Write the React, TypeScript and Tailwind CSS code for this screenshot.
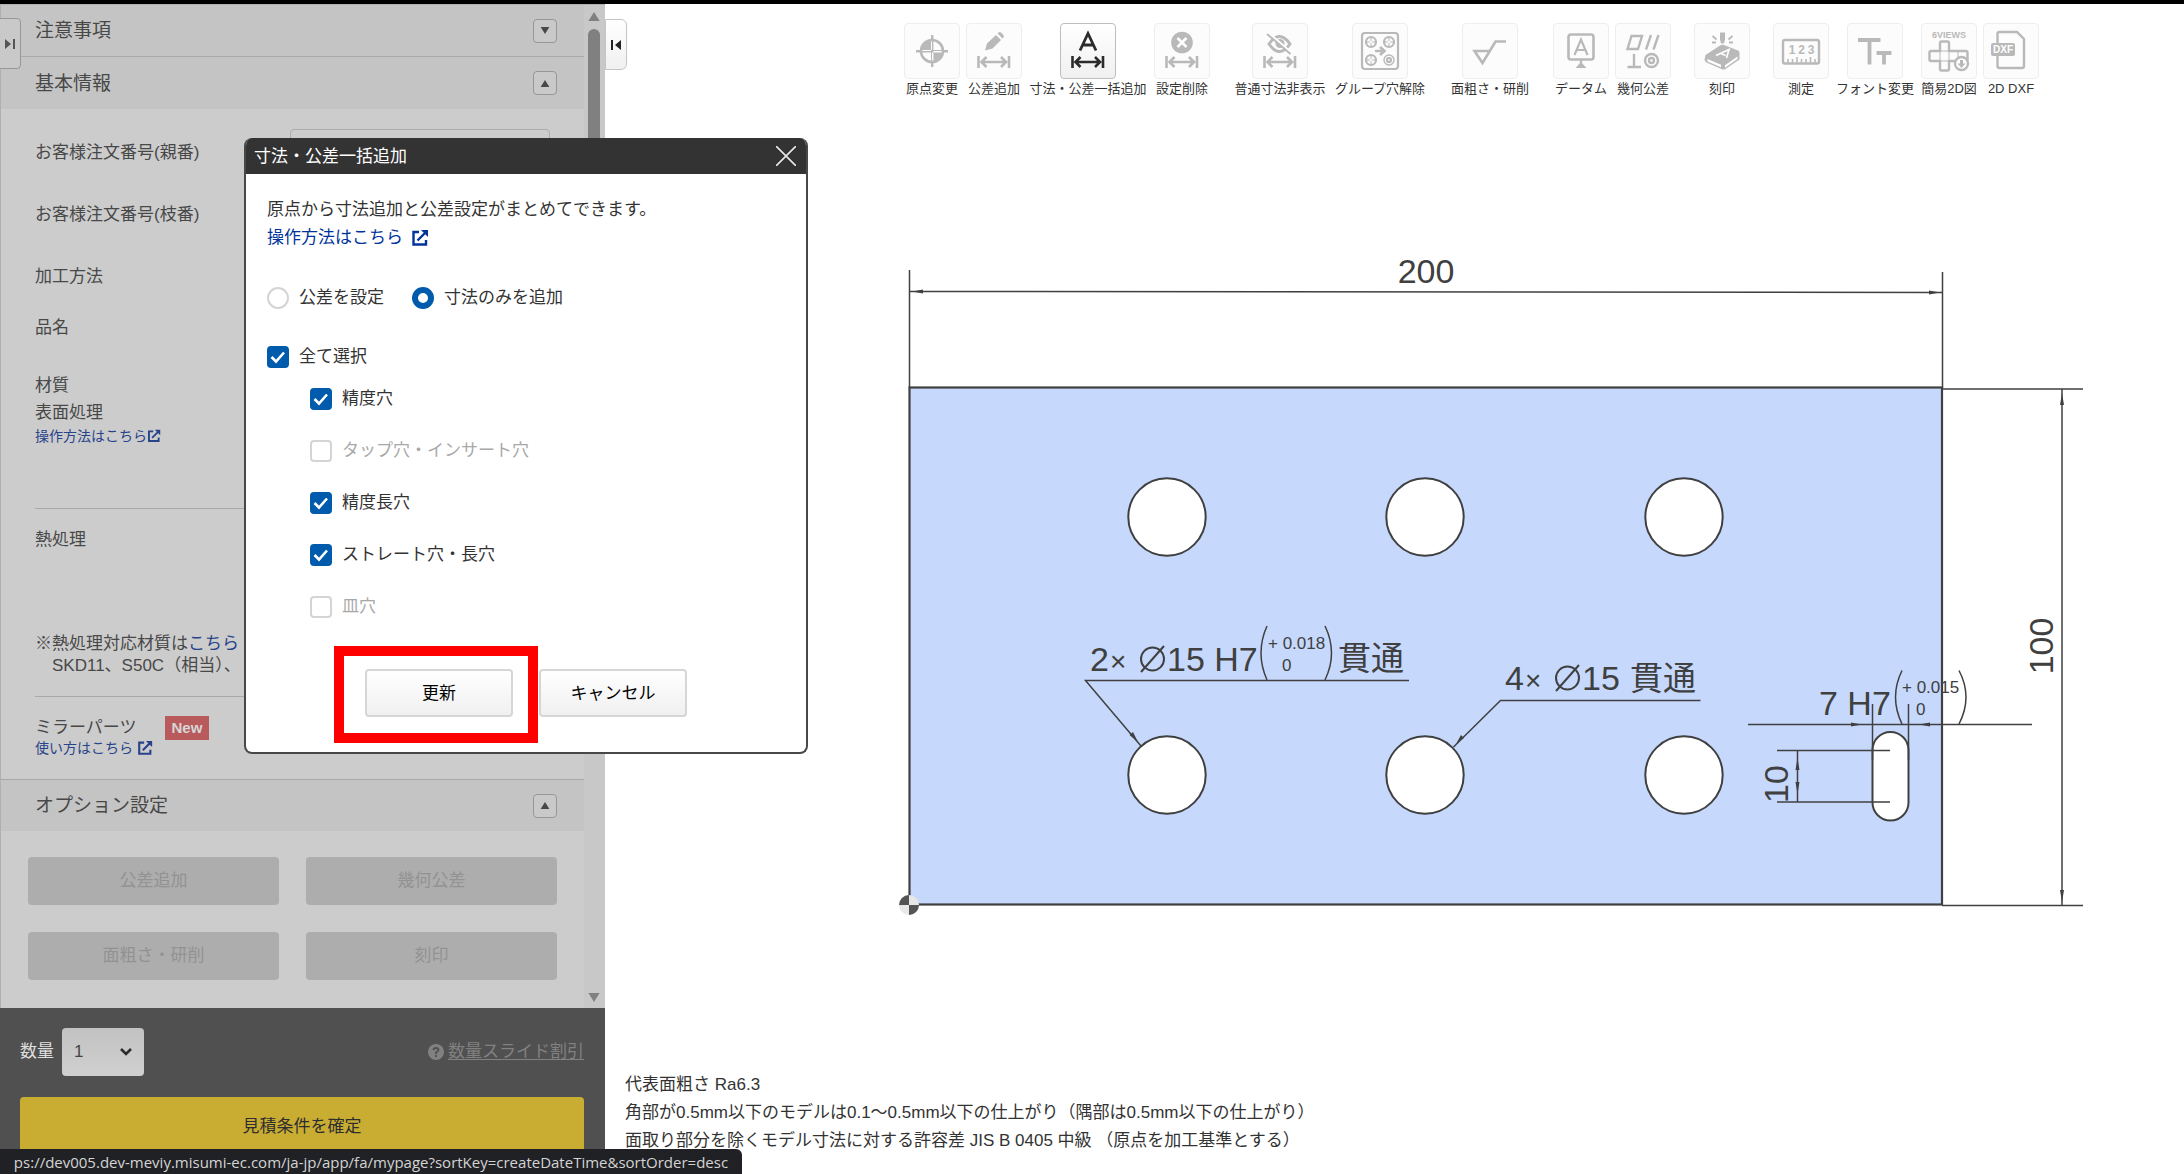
import { useState, type ReactNode } from 'react';

/* ---------- shared glyphs ---------- */

function ExternalIcon({ className }: { className: string }) {
  return (
    <svg viewBox="0 0 18 18" className={className} fill="none" stroke="currentColor" strokeWidth="2.400" aria-hidden="true">
      <path d="M8 3H2.500v12.500H15V11M6.500 11.500 15 3" />
      <path d="M10 1H17v7z" fill="currentColor" stroke="none" />
    </svg>
  );
}

function Triangle({ up, className }: { up?: boolean; className: string }) {
  return (
    <svg viewBox="0 0 10 8" className={className} fill="currentColor" aria-hidden="true">
      <path d={up ? 'M5 0 10 8H0z' : 'M0 0h10L5 8z'} />
    </svg>
  );
}

/* ---------- toolbar icons (56 x 56 grid) ---------- */

function Span() {
  return <path d="M12.5 33v12M43 33v12M15.5 39H40M20.500 34l-5 5 5 5M35 34l5 5-5 5" fill="none" stroke="currentColor" strokeWidth="2.600" />;
}

const icons: Record<string, ReactNode> = {
  origin: (
    <>
      <circle cx="28" cy="28" r="11" fill="none" stroke="currentColor" strokeWidth="2.600" />
      <path d="M28 28V17a11 11 0 0 0-11 11zM28 28v11a11 11 0 0 0 11-11zM27 12h2.400v32H27zM12 27h32v2.400H12z" fill="currentColor" />
    </>
  ),
  pencil: (
    <>
      <path d="m19 27.500 2-7L30 12l5 5-8.500 8.500zM31.500 10.500l1-1q1.500-1 3 .5l1.500 1.500q1.500 1.500.5 3l-1 1z" fill="currentColor" />
      <Span />
    </>
  ),
  bulk: (
    <>
      <path d="M20 27.500 28 10.500 36 27.500M23 22h10" fill="none" stroke="currentColor" strokeWidth="2.800" />
      <Span />
    </>
  ),
  remove: (
    <>
      <circle cx="28" cy="19.500" r="10.800" fill="currentColor" />
      <path d="m23.500 15 9 9m0-9-9 9" stroke="#fff" strokeWidth="2.600" />
      <Span />
    </>
  ),
  hide: (
    <>
      <path d="M17 21q10.500-15 21 0-10.500 15-21 0z" fill="none" stroke="currentColor" strokeWidth="3" />
      <circle cx="28" cy="20.500" r="4.500" fill="currentColor" />
      <path d="m15.500 9 24 20.500" stroke="#fff" strokeWidth="2" />
      <path d="M15 11 38.500 31" stroke="currentColor" strokeWidth="2" />
      <Span />
    </>
  ),
  group: (
    <g fill="none" stroke="currentColor" strokeWidth="2.200">
      <rect x="10" y="10" width="36" height="36" rx="3" />
      <circle cx="19" cy="19" r="5" />
      <circle cx="37" cy="19" r="5" />
      <circle cx="19" cy="37" r="5" />
      <circle cx="37" cy="37" r="5" strokeWidth="1.400" />
      <circle cx="37" cy="37" r="2" />
      <path d="M19 15v3m0 2v3m-4-4h3m2 0h3M37 15v3m0 2v3m-4-4h3m2 0h3M19 33v3m0 2v3m-4-4h3m2 0h3" strokeWidth="1" />
      <path d="M23 28h9m-4-4 4.500 4-4.500 4" strokeWidth="2.600" />
    </g>
  ),
  rough: <path d="M44 18.500H33.500L20.500 40l-8-12H27" fill="none" stroke="currentColor" strokeWidth="2.600" />,
  datum: (
    <>
      <rect x="15.500" y="11.500" width="25" height="25" rx="2.500" fill="none" stroke="currentColor" strokeWidth="2.600" />
      <path d="M21.500 32 28 16.500 34.500 32M24 27h8M28 37v5" fill="none" stroke="currentColor" strokeWidth="2.200" />
      <path d="M28 39l5.500 6h-11z" fill="currentColor" />
    </>
  ),
  geometric: (
    <g fill="none" stroke="currentColor" strokeWidth="2.400">
      <path d="M12.500 26 16.500 13H27l-4 13zM31 26.500 36 12M38.500 26.500 43.500 12M19 31v13M12.500 44h13.500" />
      <circle cx="36.500" cy="37.500" r="6.500" />
      <circle cx="36.500" cy="37.500" r="2.500" />
    </g>
  ),
  engrave: (
    <>
      <path d="M11.500 32 26 22.500q2-1 4-.5l14 5.500q2 1 1.500 3v6l-14 9.500q-2 1-4 0l-15-6.500q-2-1-2-3z" fill="currentColor" />
      <path d="M13.500 36l13.500 5.700v2.600l-13.500-5.700zM31 42.200l12.500-8.700v2.600L31 44.800z" fill="#fff" />
      <path d="M22 32.500 35 26.500 32.500 35M27 30.500l4.500 2" fill="none" stroke="#fff" strokeWidth="1.700" />
      <path d="M26 9.500h5v7l-1 4h-3l-1-4z" fill="currentColor" />
      <path d="m18.500 13 4 3.500M18 19.500h4M38.500 13l-4 3.500M39 19.500h-4" stroke="currentColor" strokeWidth="1.800" />
    </>
  ),
  measure: (
    <>
      <rect x="10" y="17" width="36" height="23.500" rx="2" fill="none" stroke="currentColor" strokeWidth="2.400" />
      <path d="M15 40v-4M19.500 40v-4M24 40v-6M28.500 40v-4M33 40v-4M37.500 40v-6M42 40v-4" stroke="currentColor" strokeWidth="1.600" />
      <g fill="currentColor" fontSize="12" fontWeight="700" textAnchor="middle">
        <text x="19" y="31">1</text>
        <text x="28.500" y="31">2</text>
        <text x="38" y="31">3</text>
      </g>
    </>
  ),
  font: <path d="M11 17h22.500M22.500 17v24.500M29.500 30h15M37 30v11.500" fill="none" stroke="currentColor" strokeWidth="3.800" />,
  views: (
    <>
      <text x="28" y="14.500" fontSize="9" fontWeight="700" textAnchor="middle" fill="currentColor">6VIEWS</text>
      <path d="M19 28v-8q0-1.500 1.500-1.500h6Q28 18.500 28 20v8h17q1.500 0 1.500 1.500v7q0 1.500-1.500 1.500H28v8q0 1.500-1.500 1.500h-6Q19 47.500 19 46v-8H10q-1.500 0-1.500-1.500v-7Q8.500 28 10 28z" fill="none" stroke="currentColor" strokeWidth="2.400" />
      <path d="M19 28h9v10h-9zM37 28v6" fill="none" stroke="currentColor" strokeWidth="1" />
      <circle cx="40.500" cy="40.500" r="6.500" fill="#fff" stroke="currentColor" strokeWidth="2.400" />
      <path d="M40.500 45 36.500 40.500h2.500V37h3v3.500h2.500z" fill="currentColor" />
    </>
  ),
  dxf: (
    <>
      <path d="M14.500 20V11q0-2 2-2H34l7 7v27q0 2-2 2H16.500q-2 0-2-2V33" fill="none" stroke="currentColor" strokeWidth="2.400" />
      <rect x="8" y="20" width="24" height="13" rx="2" fill="currentColor" />
      <text x="20" y="30" fontSize="10" fontWeight="700" textAnchor="middle" fill="#fff">DXF</text>
    </>
  ),
};

type Tool = { id: string; label: string; width: string; active?: boolean };

const toolGroups: Tool[][] = [
  [
    { id: 'origin', label: '原点変更', width: 'w-14' },
    { id: 'pencil', label: '公差追加', width: 'w-14' },
    { id: 'bulk', label: '寸法・公差一括追加', width: 'w-[120px]', active: true },
    { id: 'remove', label: '設定削除', width: 'w-14' },
  ],
  [
    { id: 'hide', label: '普通寸法非表示', width: 'w-[94px]' },
    { id: 'group', label: 'グループ穴解除', width: 'w-[94px]' },
  ],
  [{ id: 'rough', label: '面粗さ・研削', width: 'w-20' }],
  [
    { id: 'datum', label: 'データム', width: 'w-14' },
    { id: 'geometric', label: '幾何公差', width: 'w-14' },
  ],
  [{ id: 'engrave', label: '刻印', width: 'w-14' }],
  [
    { id: 'measure', label: '測定', width: 'w-14' },
    { id: 'font', label: 'フォント変更', width: 'w-20' },
    { id: 'views', label: '簡易2D図', width: 'w-14' },
    { id: 'dxf', label: '2D DXF', width: 'w-14' },
  ],
];

function Toolbar() {
  return (
    <div role="toolbar" className="flex justify-end gap-[23px] pr-[145px] pt-[19px]">
      {toolGroups.map((group) => (
        <div key={group[0].id} className="flex gap-[6px]">
          {group.map((tool) => (
            <label key={tool.id} className={`flex flex-col items-center ${tool.width}`}>
              <button
                type="button"
                disabled={!tool.active}
                className={
                  tool.active
                    ? 'size-14 rounded-sm border border-[#bdbdbd] bg-linear-to-b from-white to-[#f0f0f0] text-[#2b2b2b]'
                    : 'size-14 rounded-sm border border-[#eeeeee] bg-[#fcfcfc] text-[#b9b9b9]'
                }
              >
                <svg viewBox="1 1 54 54" className="size-full" fontFamily="Liberation Sans, sans-serif" aria-hidden="true">
                  {icons[tool.id]}
                </svg>
              </button>
              <span className="whitespace-nowrap text-[13px] leading-5 text-[#333]">{tool.label}</span>
            </label>
          ))}
        </div>
      ))}
    </div>
  );
}

/* ---------- part drawing ---------- */

const holes = [
  [1167, 517], [1425, 517], [1684, 517],
  [1167, 775], [1425, 775], [1684, 775],
];

function Drawing() {
  return (
    <svg viewBox="605 99 1579 972" className="block w-full" role="img" aria-label="2D図面" fontFamily='"Liberation Sans", "Noto Sans CJK JP", sans-serif' fill="#404040">
      <rect x="909.500" y="387.500" width="1032.500" height="517" fill="#c6d9fd" stroke="#404040" strokeWidth="2.200" />
      <g fill="#fff" stroke="#404040" strokeWidth="2">
        {holes.map(([x, y]) => (
          <circle key={`${x}-${y}`} cx={x} cy={y} r="38.700" />
        ))}
        <rect x="1872.500" y="732" width="36" height="88.500" rx="18" />
      </g>

      <g stroke="#404040" strokeWidth="1.500" fill="none">
        <path d="M909.500 270V388M1942.500 272V388M910 291.500 1942 292.500" />
        <path d="M1942 389H2083M1942 905.500H2083M2062 389V905" />
        <path d="M1409 680.500H1085.500L1141 746" />
        <path d="M1700.500 700.500H1500.500L1453.500 747" />
        <path d="M1748 724.500H2032M1872.500 704V760M1908.500 704V760" />
        <path d="M1777 750.500H1890M1777 802H1890M1797.500 750.500V802" />
        <path d="M1267 626Q1255 653 1267 680M1325 626Q1338 653 1325 680" />
        <path d="M1902 670.500Q1889 697 1902 724M1959 670.500Q1973 697 1959 724" />
      </g>
      <path d="M912 291.500l11-2v4zM1940 292.500l-11-2v4zM2062 393l-2 12h4zM2062 902l-2-12h4zM1138 742l-8.500-7 3.500-3zM1456 744l5-9 3 3zM1862 724.500l-11-2v4zM1919 724.500l11-2v4zM1797.500 758l-2 12h4zM1797.500 794l-2-12h4z" />

      <g fontSize="34">
        <text x="1426" y="283" textAnchor="middle">200</text>
        <text transform="translate(2053 646) rotate(-90)" textAnchor="middle">100</text>
        <text transform="translate(1788 784) rotate(-90)" textAnchor="middle">10</text>

        <text x="1090" y="671">2</text>
        <text x="1110" y="671" fontSize="28">×</text>
        <text x="1167" y="671">15 H7</text>
        <text x="1338" y="670" fontSize="33">貫通</text>

        <text x="1505" y="690">4</text>
        <text x="1525" y="690" fontSize="28">×</text>
        <text x="1582" y="690">15</text>
        <text x="1630" y="690" fontSize="33">貫通</text>

        <text x="1819" y="715">7 H7</text>
      </g>
      <g fill="none" stroke="#404040" strokeWidth="2">
        <circle cx="1152.500" cy="659" r="11.500" />
        <path d="M1141 672 1164 646" />
        <circle cx="1567.500" cy="678" r="11.500" />
        <path d="M1556 691 1579 665" />
      </g>
      <g fontSize="17">
        <text x="1268" y="649">+ 0.018</text>
        <text x="1282" y="671">0</text>
        <text x="1902" y="693">+ 0.015</text>
        <text x="1916" y="715">0</text>
      </g>

      <circle cx="909" cy="905" r="10" fill="#e8e8e8" />
      <path d="M909 905V895a10 10 0 0 0-10 10zM909 905v10a10 10 0 0 0 10-10z" fill="#555" />
    </svg>
  );
}

/* ---------- side panel ---------- */

function SectionHeader({ title, open, line }: { title: string; open?: boolean; line?: string }) {
  return (
    <div className={`flex h-[52px] items-center justify-between border-[#a9a9a9] bg-[#c4c4c4] pl-[34px] pr-[27px] ${line ?? ''}`}>
      <h2 className="pt-[2px] text-[19px]">{title}</h2>
      <button type="button" aria-label={title} className="flex size-6 items-center justify-center rounded-sm border border-[#979797] bg-[#c9c9c9]">
        <Triangle up={open} className="h-[7px] w-[10px]" />
      </button>
    </div>
  );
}

function SidePanel() {
  return (
    <aside className="flex w-[605px] shrink-0 flex-col text-[17px] text-[#484848]">
      <div className="flex border-l border-t border-[#b0b0b0] bg-[#cccccc]">
        <div className="min-w-0 flex-1">
          <SectionHeader title="注意事項" line="border-b" />
          <SectionHeader title="基本情報" open />
          <div className="px-[34px] pt-[13px]">
            <div className="flex h-[62px] items-center justify-between">
              <label htmlFor="order-parent">お客様注文番号(親番)</label>
              <input id="order-parent" className="h-12 w-[260px] rounded-sm border border-[#adadad] bg-[#cccccc]" />
            </div>
            <p className="flex h-[62px] items-center">お客様注文番号(枝番)</p>
            <p className="flex h-[62px] items-center">加工方法</p>
            <p className="flex h-10 items-center">品名</p>
            <p className="mt-6 leading-7">材質</p>
            <p className="leading-[26px]">表面処理</p>
            <a href="#usage" className="flex h-5 items-center text-[14px] text-[#27438a]">
              操作方法はこちら<ExternalIcon className="size-[14px]" />
            </a>
            <hr className="mt-[62px] border-[#a9a9a9]" />
            <p className="mt-[17px] leading-7">熱処理</p>
            <p className="mt-[79px] leading-[22px]">
              ※熱処理対応材質は<a href="#materials" className="text-[#27438a]">こちら</a>
            </p>
            <p className="pl-[17px] leading-[22px]">SKD11、S50C（相当）、</p>
            <hr className="mt-[19px] border-[#a9a9a9]" />
            <div className="mt-[19px] flex h-6 items-center gap-[28px]">
              <span>ミラーパーツ</span>
              <span className="bg-[#b95a5d] px-[7px] text-[15px] font-bold leading-6 text-[#d6d6d6]">New</span>
            </div>
            <a href="#mirror" className="flex h-4 items-center gap-1 text-[14px] text-[#27438a]">
              使い方はこちら<ExternalIcon className="size-4" />
            </a>
          </div>
          <div className="mt-[23px]">
            <SectionHeader title="オプション設定" open line="border-t" />
          </div>
          <div className="grid grid-cols-2 gap-[27px] px-[27px] pb-7 pt-[26px]">
            {['公差追加', '幾何公差', '面粗さ・研削', '刻印'].map((name) => (
              <button key={name} type="button" disabled className="h-12 rounded-sm bg-[#adadad] text-[#929292]">
                {name}
              </button>
            ))}
          </div>
        </div>
        <div className="flex w-[21px] flex-col items-center justify-between bg-[#c8c8c8] pb-[6px] pr-px pt-[7px] text-[#808080]">
          <div className="flex flex-col items-center gap-2">
            <Triangle up className="h-[9px] w-3" />
            <div className="h-[420px] w-3 rounded-full bg-[#808080]" />
          </div>
          <Triangle className="h-[9px] w-3" />
        </div>
      </div>
      <div className="flex-1 bg-[#505050] pb-4 pl-5 pr-[21px] pt-5">
        <div className="flex items-center justify-between">
          <label className="flex items-center gap-2 text-[#dedede]">
            数量
            <span className="relative">
              <select defaultValue="1" className="h-12 w-[82px] appearance-none rounded-sm bg-linear-to-b from-[#c2c2c2] to-[#d0d0d0] pl-3 text-[#444]">
                <option>1</option>
              </select>
              <svg viewBox="0 0 12 8" className="pointer-events-none absolute right-3 top-5 h-2 w-3" fill="none" stroke="#2b2b2b" strokeWidth="2.600" aria-hidden="true">
                <path d="m1 1 5 5 5-5" />
              </svg>
            </span>
          </label>
          <a href="#discount" className="flex items-center gap-1 text-[#818181]">
            <svg viewBox="0 0 16 16" className="size-4" aria-hidden="true">
              <circle cx="8" cy="8" r="8" fill="currentColor" />
              <path d="M5.500 6.200Q5.700 4 8 4t2.500 2Q10.500 7.300 8 8.500V10M8 11v2" fill="none" stroke="#505050" strokeWidth="1.900" />
            </svg>
            <span className="underline underline-offset-2">数量スライド割引</span>
          </a>
        </div>
        <button type="button" className="mt-[21px] h-[60px] w-full rounded-sm bg-[#c9ad33] text-[#2e2e2e]">
          見積条件を確定
        </button>
      </div>
    </aside>
  );
}

/* ---------- dialog ---------- */

function Check({ label, initial, disabled }: { label: string; initial?: boolean; disabled?: boolean }) {
  const [on, setOn] = useState(!!initial);
  return (
    <label className={`flex items-center gap-[10px] ${disabled ? 'text-[#a8a8a8]' : ''}`}>
      <span className="relative size-[22px]">
        <input
          type="checkbox"
          checked={on}
          disabled={disabled}
          onChange={() => setOn(!on)}
          className="block size-[22px] appearance-none rounded-sm border-2 border-[#d4d4d4] bg-white checked:border-[#005bac] checked:bg-[#005bac]"
        />
        {on && (
          <svg viewBox="0 0 22 22" className="pointer-events-none absolute inset-0" fill="none" stroke="#fff" strokeWidth="2.600" aria-hidden="true">
            <path d="m4.500 11 4.500 4.500 8-9" />
          </svg>
        )}
      </span>
      {label}
    </label>
  );
}

function BulkDialog() {
  const [mode, setMode] = useState('dims');
  const radio =
    'size-[22px] appearance-none rounded-full border-2 border-[#d4d4d4] bg-white checked:border-[6px] checked:border-[#005bac]';
  const action = 'h-12 w-[148px] rounded-sm border-2 border-[#d6d6d6] bg-linear-to-b from-white to-[#f0f0f0] pt-[2px] text-black';
  return (
    <section role="dialog" aria-label="寸法・公差一括追加" className="absolute left-[244px] top-[138px] w-[564px] overflow-hidden rounded-lg border-2 border-t-0 border-[#484848] bg-white text-[17px] text-[#333]">
      <header className="flex h-9 items-center justify-between bg-[#333] pl-2 pr-[10px] text-white">
        <h1 className="pt-[2px]">寸法・公差一括追加</h1>
        <button type="button" aria-label="閉じる">
          <svg viewBox="0 0 20 20" className="size-5" stroke="#e8e8e8" strokeWidth="1.600" aria-hidden="true">
            <path d="m0 0 20 20M20 0 0 20" />
          </svg>
        </button>
      </header>
      <div className="px-[21px] pb-[35px] pt-[22px]">
        <p className="leading-7">原点から寸法追加と公差設定がまとめてできます。</p>
        <a href="#help" className="flex h-7 items-center gap-2 text-[#00349a]">
          操作方法はこちら<ExternalIcon className="size-[18px]" />
        </a>
        <div className="mt-[30px] flex h-8 items-center gap-7">
          <label className="flex items-center gap-[10px]">
            <input type="radio" name="mode" className={radio} checked={mode === 'tol'} onChange={() => setMode('tol')} />
            公差を設定
          </label>
          <label className="flex items-center gap-[10px]">
            <input type="radio" name="mode" className={radio} checked={mode === 'dims'} onChange={() => setMode('dims')} />
            寸法のみを追加
          </label>
        </div>
        <div className="mt-[27px] flex h-8 items-center">
          <Check label="全て選択" initial />
        </div>
        <ul className="pl-[43px]">
          <li className="flex h-[52px] items-center"><Check label="精度穴" initial /></li>
          <li className="flex h-[52px] items-center"><Check label="タップ穴・インサート穴" disabled /></li>
          <li className="flex h-[52px] items-center"><Check label="精度長穴" initial /></li>
          <li className="flex h-[52px] items-center"><Check label="ストレート穴・長穴" initial /></li>
          <li className="flex h-[52px] items-center"><Check label="皿穴" disabled /></li>
        </ul>
        <div className="mt-9 flex justify-center gap-[26px]">
          <div className="relative">
            <button type="button" className={action}>更新</button>
            <span className="pointer-events-none absolute -bottom-[26px] -left-[31px] -right-[25px] -top-[23px] border-[10px] border-[#ff0000]" />
          </div>
          <button type="button" className={action}>キャンセル</button>
        </div>
      </div>
    </section>
  );
}

/* ---------- page ---------- */

export default function App() {
  return (
    <div className='relative flex min-h-screen flex-col overflow-hidden bg-white font-["Liberation_Sans","Noto_Sans_CJK_JP",sans-serif]' lang="ja">
      <div className="h-1 bg-black" />
      <div className="relative flex flex-1">
        <SidePanel />
        <main className="min-w-0 flex-1">
          <Toolbar />
          <Drawing />
          <div className="pl-5 text-[17px] leading-7 text-[#333]">
            <p>代表面粗さ Ra6.3</p>
            <p>角部が0.5mm以下のモデルは0.1〜0.5mm以下の仕上がり（隅部は0.5mm以下の仕上がり）</p>
            <p>面取り部分を除くモデル寸法に対する許容差 JIS B 0405 中級 （原点を加工基準とする）</p>
          </div>
        </main>
        <button type="button" aria-label="パネルを開く" className="absolute -left-px top-[14px] flex h-[51px] w-[22px] items-center justify-center rounded-r-sm border border-[#979797] bg-[#c9c9c9] text-[#555]">
          <svg viewBox="0 0 10 10" className="size-[10px]" aria-hidden="true"><path d="M0 0l6 5-6 5zM8 0h2v10H8z" fill="currentColor" /></svg>
        </button>
        <button type="button" aria-label="パネルを閉じる" className="absolute left-[605px] top-[15px] flex h-[51px] w-[22px] items-center justify-center rounded-r-md border border-[#c4c4c4] bg-linear-to-b from-white to-[#f0f0f0] text-[#222]">
          <svg viewBox="0 0 10 10" className="size-[10px]" aria-hidden="true"><path d="M10 0L4 5l6 5zM0 0h2v10H0z" fill="currentColor" /></svg>
        </button>
      </div>
      <BulkDialog />
      <div className='absolute bottom-0 left-0 flex h-[25px] w-[742px] items-center justify-center whitespace-nowrap rounded-tr-md bg-[#202124] font-["Open_Sans","Noto_Sans",sans-serif] text-[15px] leading-6 text-[#d4d4d4]'>
        ps://dev005.dev-meviy.misumi-ec.com/ja-jp/app/fa/mypage?sortKey=createDateTime&amp;sortOrder=desc
      </div>
    </div>
  );
}
